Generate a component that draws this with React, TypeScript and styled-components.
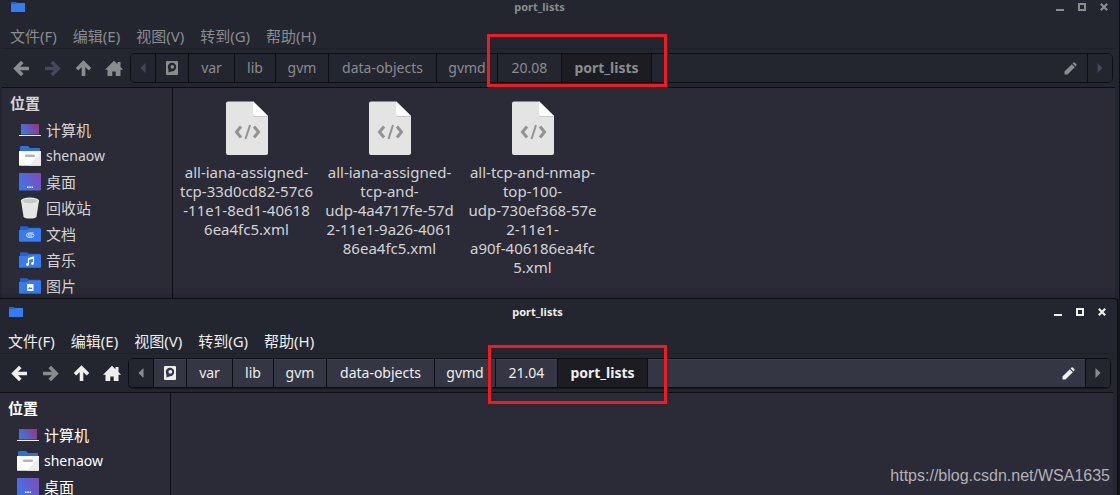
import React, { useId } from "react";
import styled, { createGlobalStyle, css } from "styled-components";

const line = "#0d0e13";

const GlobalStyle = createGlobalStyle`
  * { box-sizing: border-box; }
  html, body { margin: 0; height: 100%; background: #17191f; }
  body {
    font-family: "Noto Sans", "Noto Sans CJK SC", sans-serif;
    font-size: 14px;
    overflow: hidden;
  }
  #root { height: 100%; }
  button {
    margin: 0;
    padding: 0;
    border: 0;
    background: none;
    color: inherit;
    font: inherit;
  }
  svg { display: block; flex: none; }
`;

const Desktop = styled.main`
  position: relative;
  display: flex;
  flex-direction: column;
  height: 100%;
  overflow: hidden;
`;

const Frame = styled.section<{ $active: boolean }>`
  position: relative;
  display: flex;
  flex-direction: column;
  background: #23262e;
  color: ${(p) => (p.$active ? "#eeeeec" : "#8a8c8f")};
  border-right: 1px solid ${line};
  ${(p) =>
    p.$active
      ? css`
          flex: 1;
          margin: -1px 2px 0 0;
          padding-right: 4px;
          border-top: 1px solid ${line};
          border-top-right-radius: 4px;
          box-shadow: 0 0 8px rgba(0, 0, 0, 0.35);
        `
      : css`
          padding: 0 4px 0 2px;
        `}
`;

const TitleBar = styled.header<{ $active: boolean }>`
  display: grid;
  grid-template-columns: 1fr auto 1fr;
  align-items: center;
  height: ${(p) => (p.$active ? 26 : 20)}px;
  padding: 0 8px ${(p) => (p.$active ? 0 : 6)}px;
`;

const Title = styled.h1`
  margin: 0 0 0 -38px;
  font-size: 11px;
  line-height: 14px;
  font-weight: 700;
`;

const Controls = styled.div`
  display: flex;
  justify-content: flex-end;
  gap: 14px;
  margin-right: -1px;
`;

const MenuBar = styled.nav`
  display: flex;
  gap: 16px;
  height: 28px;
  padding: 4px 8px 0;
  font-size: 15px;
  line-height: 24px;
`;

const Menu = styled.button`
  white-space: nowrap;
`;

const ToolBar = styled.div`
  display: flex;
  align-items: center;
  padding: 4px 2px 4px 10px;
  border-top: 1px solid #1e2027;
  border-bottom: 1px solid ${line};
`;

const NavButtons = styled.div`
  display: flex;
  gap: 12px;
  margin-right: 6px;
`;

const NavButton = styled.button<{ $color?: string }>`
  display: grid;
  place-items: center;
  width: 19px;
  height: 20px;
  ${(p) => p.$color && `color: ${p.$color};`}
`;

const PathBar = styled.div<{ $active: boolean }>`
  display: flex;
  flex: 1;
  height: 30px;
  border: 1px solid ${line};
  border-radius: 5px;
  background: ${(p) => (p.$active ? "#343743" : "#23262e")};
  ${(p) => p.$active && "box-shadow: 0 1px 0 #15171c, inset 0 1px 0 #3f424e;"}
`;

const Segment = styled.button<{ $width: number; $current?: boolean }>`
  width: ${(p) => p.$width}px;
  border-right: 1px solid ${line};
  line-height: 26px;
  ${(p) =>
    p.$current &&
    css`
      background: #1b1d23;
      font-weight: 700;
    `}
`;

const IconSegment = styled(Segment)`
  display: grid;
  place-items: center;
`;

const ScrollEnd = styled.button<{ $side: "left" | "right"; $color: string }>`
  display: grid;
  place-items: center;
  width: 25px;
  background: #23262e;
  color: ${(p) => p.$color};
  border-${(p) => (p.$side === "left" ? "right" : "left")}: 1px solid ${line};
  border-radius: ${(p) => (p.$side === "left" ? "4px 0 0 4px" : "0 4px 4px 0")};
`;

const EditPath = styled.button`
  display: grid;
  place-items: center;
  width: 34px;
  margin-left: auto;
`;

const Body = styled.div`
  display: flex;
  flex: 1;
  min-height: 0;
  background: #2a2b36;
`;

const SideBar = styled.aside<{ $active: boolean }>`
  width: 171px;
  border-right: 1px solid ${line};
  color: ${(p) => (p.$active ? "#ffffff" : "#d3d3d5")};
`;

const SideHeading = styled.h2`
  margin: 0;
  padding: 2px 8px 0;
  height: 29px;
  font-size: 15px;
  line-height: 26px;
  font-weight: 700;
`;

const Places = styled.ul`
  margin: 0;
  padding: 0;
  list-style: none;
`;

const Place = styled.a`
  display: flex;
  align-items: center;
  gap: 5px;
  height: 26px;
  padding-left: 17px;
  color: inherit;
  text-decoration: none;
`;

const PlaceName = styled.span<{ $cjk: boolean }>`
  font-size: ${(p) => (p.$cjk ? 15 : 14)}px;
  line-height: 24px;
`;

const Files = styled.ul`
  display: flex;
  align-items: flex-start;
  margin: 0;
  padding: 12px 0 0 2px;
  list-style: none;
  color: #d3d3d5;
`;

const File = styled.li`
  display: flex;
  flex-direction: column;
  align-items: center;
  gap: 7px;
  width: 143px;
`;

const FileName = styled.span`
  font-size: 15px;
  line-height: 19px;
  text-align: center;
`;

const NameLine = styled.span`
  display: block;
  white-space: nowrap;
`;

const Marker = styled.div<{ $top: number; $left: number; $width: number; $height: number }>`
  position: absolute;
  top: ${(p) => p.$top}px;
  left: ${(p) => p.$left}px;
  width: ${(p) => p.$width}px;
  height: ${(p) => p.$height}px;
  border: 3px solid #ed1c24;
  pointer-events: none;
`;

const Watermark = styled.a`
  position: absolute;
  right: 10px;
  bottom: 9px;
  color: #b2b2b6;
  font-family: "Liberation Sans", Arial, sans-serif;
  font-size: 16px;
  line-height: 20px;
  text-decoration: none;
`;

const FolderMini = () => (
  <svg width="16" height="12" viewBox="0 0 16 12">
    <path d="M1 1h5l1 1h7v3H1z" fill="#2a62c4" />
    <path d="M1 3h5l1-1h8v8.500q0 .5-.5.5h-13q-.5 0-.5-.5z" fill="#367bf0" />
  </svg>
);

const ArrowIcon = ({ turn }: { turn: number }) => (
  <svg width="17" height="17" viewBox="0 0 17 17">
    <path
      d="M9.300 2 2.800 8.500 9.300 15M3.500 8.500H16"
      transform={`rotate(${turn} 8.500 8.500)`}
      fill="none"
      stroke="currentColor"
      strokeWidth="3.600"
    />
  </svg>
);

const HomeIcon = () => (
  <svg width="19" height="17" viewBox="0 0 19 17" fill="currentColor">
    <path d="M9 .8 12.500 4.200V2h3v5.100l2.600 2.600H15.500V16h-4.800v-4.500H7.300V16H2.500V9.700H0z" />
  </svg>
);

const DiskIcon = ({ hole }: { hole: string }) => (
  <svg width="12" height="14" viewBox="0 0 12 14">
    <rect width="12" height="14" rx="1" fill="currentColor" />
    <path d="M2.500 11.500V7.500L6 10.200z" fill={hole} />
    <circle cx="6" cy="6" r="4.200" fill={hole} />
    <circle cx="6.300" cy="5.800" r="1.900" fill="currentColor" />
  </svg>
);

const Triangle = ({ flip }: { flip?: boolean }) => (
  <svg width="6" height="10" viewBox="0 0 6 10" fill="currentColor">
    <path d={flip ? "M.5 0 5.500 5 .5 10z" : "M5.500 0 .5 5l5 5z"} />
  </svg>
);

const PencilIcon = () => (
  <svg width="13" height="13" viewBox="0 0 13 13" fill="currentColor">
    <path d="M.5 12.500V9.500L7.800 2.200l3 3-7.300 7.300z" />
    <path d="m8.600 1.400.9-.9q.6-.4 1.200 0l1.700 1.800q.5.600 0 1.200l-.8.900z" />
  </svg>
);

const MinimizeIcon = () => (
  <svg width="8" height="8" viewBox="0 0 8 8"><path d="M0 6h8v2H0z" fill="currentColor" /></svg>
);
const MaximizeIcon = () => (
  <svg width="8" height="8" viewBox="0 0 8 8"><path d="M1 1h6v6H1z" fill="none" stroke="currentColor" strokeWidth="2" /></svg>
);
const CloseIcon = () => (
  <svg width="8" height="8" viewBox="0 0 8 8"><path d="m.8.8 6.400 6.400M7.200.8.8 7.200" stroke="currentColor" strokeWidth="2.200" /></svg>
);

type PlaceKind = "computer" | "home" | "desktop" | "trash" | "docs" | "music" | "pictures";

const PlaceIcon = ({ kind }: { kind: PlaceKind }) => {
  const id = useId();
  const gradient = (
    <defs>
      <linearGradient id={id} x1="0" y1="0.600" x2="1" y2="0.200">
        <stop offset="0" stopColor="#3f74e8" />
        <stop offset="1" stopColor={kind === "computer" ? "#94387f" : "#7d4dbb"} />
      </linearGradient>
    </defs>
  );
  return (
    <svg width="22" height="22" viewBox="0 0 22 22">
      {kind === "computer" && (
        <>
          {gradient}
          <rect x="2" y="5" width="18" height="10.500" fill={`url(#${id})`} />
          <path d="M0 16h22v1H0z" fill="#f4f4f4" />
        </>
      )}
      {kind === "home" && (
        <>
          <path d="M1 2q0-1 1-1h7l2 2h9q1 0 1 1v3H1z" fill="#2f6fe0" />
          <path d="M0 6h22v14q0 .8-.8.8H.8Q0 20.800 0 20z" fill="#fff" />
          <path d="M22 7v13q0 .8-.8.8H10z" fill="#ececec" />
          <rect x="6" y="9.500" width="10" height="2.500" rx="1" fill="#b5b5b5" />
        </>
      )}
      {kind === "desktop" && (
        <>
          {gradient}
          <rect y="2" width="22" height="17.500" rx=".8" fill={`url(#${id})`} />
          <path d="M8 15.500h1.500V17H8zm2.300 0h1.500V17h-1.500zm2.300 0H14V17h-1.400z" fill="#fff" />
        </>
      )}
      {kind === "trash" && (
        <>
          <path d="M2 3.500h18l-2.500 16q-.4 2-6.500 2t-6.500-2z" fill="#e6e6e6" />
          <ellipse cx="11" cy="3.700" rx="9" ry="3.200" fill="#f5f5f5" />
          <ellipse cx="11" cy="4" rx="7.800" ry="2.400" fill="#c9c9c9" />
        </>
      )}
      {(kind === "docs" || kind === "music" || kind === "pictures") && (
        <>
          <path d="M1 4q0-.8.800-.8H8l2 1.500h11V8H1z" fill="#2a60c2" />
          <path d="M0 7h8l2-1.500h12v12.500q0 .8-.8.800H.8Q0 18.800 0 18z" fill="#367bf0" />
        </>
      )}
      {kind === "docs" && (
        <path d="M14.500 10H10q-2.500 0-2.500 2.200T10 14.300h3q2-.3 2-1.800T13 11h-2.500q-1.200 0-1.200 1t1.200 1H13" fill="none" stroke="#dce8ff" />
      )}
      {kind === "music" && (
        <>
          <path d="M9.500 15.500V9.500l5-1.500v6.500M9.500 10.500l5-1.500" fill="none" stroke="#fff" strokeWidth="1.200" />
          <circle cx="8.500" cy="15.500" r="1.400" fill="#fff" />
          <circle cx="13.500" cy="14.500" r="1.400" fill="#fff" />
        </>
      )}
      {kind === "pictures" && (
        <>
          <rect x="8" y="9" width="6.500" height="7" fill="#fff" />
          <path d="m9 14 1.500-2 1 1 .8-.8L13.500 14z" fill="#367bf0" />
        </>
      )}
    </svg>
  );
};

const XmlIcon = () => (
  <svg width="44" height="56" viewBox="0 0 44 56">
    <path d="M3 1.500h25.500L43 16v37q0 2-2 2H3q-2 0-2-2V3.500q0-2 2-2z" fill="#e4e4e4" />
    <path d="M28 1.500 43 16H30q-2 0-2-2z" fill="#c9c9c9" transform="translate(0 1)" />
    <path d="M28 1.500 43 16H30q-2 0-2-2z" fill="#fff" />
    <path d="m16 26.500-4.500 5.500 4.500 5.500M29 26.500l4.500 5.500-4.500 5.500" fill="none" stroke="#939393" strokeWidth="3" />
    <path d="m25 25-4.500 14" stroke="#939393" strokeWidth="2" />
  </svg>
);

const menus = ["文件(F)", "编辑(E)", "视图(V)", "转到(G)", "帮助(H)"];

const places: { kind: PlaceKind; name: string }[] = [
  { kind: "computer", name: "计算机" },
  { kind: "home", name: "shenaow" },
  { kind: "desktop", name: "桌面" },
  { kind: "trash", name: "回收站" },
  { kind: "docs", name: "文档" },
  { kind: "music", name: "音乐" },
  { kind: "pictures", name: "图片" },
];

const files = [
  ["all-iana-assigned-", "tcp-33d0cd82-57c6", "-11e1-8ed1-40618", "6ea4fc5.xml"],
  ["all-iana-assigned-", "tcp-and-", "udp-4a4717fe-57d", "2-11e1-9a26-4061", "86ea4fc5.xml"],
  ["all-tcp-and-nmap-", "top-100-", "udp-730ef368-57e", "2-11e1-", "a90f-406186ea4fc", "5.xml"],
];

type FileWindowProps = {
  active: boolean;
  version: string;
  versionWidth: number;
  shown: typeof places;
  entries: string[][];
  children: React.ReactNode;
};

const FileWindow = ({ active, version, versionWidth, shown, entries, children }: FileWindowProps) => {
  const disabled = active ? "#8a8b8d" : "#444858";
  const segments: [string, number][] = [
    ["var", 46],
    ["lib", 41],
    ["gvm", 53],
    ["data-objects", 108],
    ["gvmd", 61],
    [version, versionWidth],
  ];
  return (
    <Frame $active={active}>
      <TitleBar $active={active}>
        <FolderMini />
        <Title>port_lists</Title>
        <Controls>
          <button aria-label="Minimize"><MinimizeIcon /></button>
          <button aria-label="Maximize"><MaximizeIcon /></button>
          <button aria-label="Close"><CloseIcon /></button>
        </Controls>
      </TitleBar>
      <MenuBar>
        {menus.map((m) => <Menu key={m}>{m}</Menu>)}
      </MenuBar>
      <ToolBar>
        <NavButtons>
          <NavButton aria-label="Back"><ArrowIcon turn={0} /></NavButton>
          <NavButton aria-label="Forward" $color={disabled}><ArrowIcon turn={180} /></NavButton>
          <NavButton aria-label="Up"><ArrowIcon turn={90} /></NavButton>
          <NavButton aria-label="Home"><HomeIcon /></NavButton>
        </NavButtons>
        <PathBar $active={active}>
          <ScrollEnd aria-label="Scroll path left" $side="left" $color={disabled}><Triangle /></ScrollEnd>
          <IconSegment aria-label="File system" $width={33}>
            <DiskIcon hole={active ? "#343743" : "#23262e"} />
          </IconSegment>
          {segments.map(([name, width]) => <Segment key={name} $width={width}>{name}</Segment>)}
          <Segment $width={90} $current>port_lists</Segment>
          <EditPath aria-label="Edit path"><PencilIcon /></EditPath>
          <ScrollEnd aria-label="Scroll path right" $side="right" $color={disabled}><Triangle flip /></ScrollEnd>
        </PathBar>
      </ToolBar>
      <Body>
        <SideBar $active={active}>
          <SideHeading>位置</SideHeading>
          <Places>
            {shown.map((p) => (
              <li key={p.kind}>
                <Place href={`#${p.kind}`}>
                  <PlaceIcon kind={p.kind} />
                  <PlaceName $cjk={p.kind !== "home"}>{p.name}</PlaceName>
                </Place>
              </li>
            ))}
          </Places>
        </SideBar>
        <Files>
          {entries.map((lines) => (
            <File key={lines.join("")}>
              <XmlIcon />
              <FileName>
                {lines.map((l) => <NameLine key={l}>{l}</NameLine>)}
              </FileName>
            </File>
          ))}
        </Files>
      </Body>
      {children}
    </Frame>
  );
};

export default function App() {
  return (
    <Desktop>
      <GlobalStyle />
      <FileWindow active={false} version="20.08" versionWidth={64} shown={places} entries={files}>
        <Marker $top={34} $left={487} $width={180} $height={53} />
      </FileWindow>
      <FileWindow active version="21.04" versionWidth={62} shown={places.slice(0, 3)} entries={[]}>
        <Marker $top={46} $left={488} $width={179} $height={59} />
      </FileWindow>
      <Watermark href="https://blog.csdn.net/WSA1635">https://blog.csdn.net/WSA1635</Watermark>
    </Desktop>
  );
}
